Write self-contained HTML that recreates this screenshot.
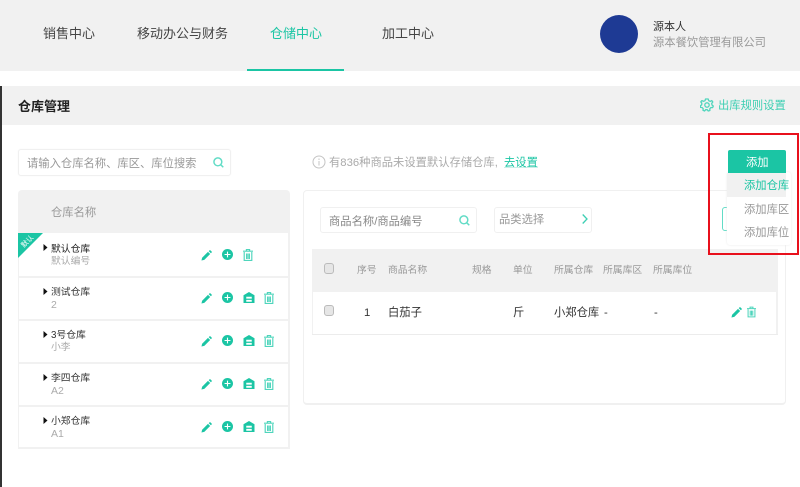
<!DOCTYPE html>
<html lang="zh">
<head>
<meta charset="utf-8">
<style>
html,body{margin:0;padding:0;background:#fff}
body{width:800px;height:487px;position:relative;overflow:hidden;font-family:"Liberation Sans","Noto Sans CJK SC",sans-serif;color:#333}
.a{position:absolute}
.t{position:absolute;white-space:nowrap;line-height:16px;height:16px;margin-top:1px}
svg{position:absolute;display:block}
.g{color:#999}
.c{color:#1bc5a4}
</style>
</head>
<body>
<svg width="0" height="0" style="position:absolute">
<defs>
<symbol id="pen" viewBox="0 0 12 12"><path d="M0.5 11.5 L1.2 8.4 L7.6 2 L10 4.4 L3.6 10.8 Z M8.4 1.2 L9.3 0.4 Q9.8 0 10.3 0.4 L11.6 1.7 Q12 2.2 11.6 2.7 L10.8 3.6 Z" fill="#1bc5a4"/></symbol>
<symbol id="plus" viewBox="0 0 12 12"><circle cx="6" cy="6" r="6" fill="#1bc5a4"/><path d="M6 2.8V9.2M2.8 6H9.2" stroke="#fff" stroke-width="1.2"/></symbol>
<symbol id="house" viewBox="0 0 12 12"><path d="M0 3.6 L6 0 L12 3.6 V12 H0 Z" fill="#1bc5a4"/><path d="M3 5.2H9V7.2H3ZM3 8.6H9V10.6H3Z" fill="#fff"/></symbol>
<symbol id="trash" viewBox="0 0 10 12"><path d="M0 2.2H10M3.4 2V0.6H6.6V2M1.2 3V11.4H8.8V3M3.6 4.5V10M5 4.5V10M6.4 4.5V10" fill="none" stroke="#4fd5bc" stroke-width="1.15"/></symbol>
<symbol id="search" viewBox="0 0 12 12"><circle cx="5.3" cy="5.3" r="4.3" fill="none" stroke="#62dcc6" stroke-width="1.6"/><path d="M8.4 8.4L11.2 11.2" stroke="#62dcc6" stroke-width="1.6"/></symbol>
</defs>
</svg>

<!-- top bar -->
<div class="a" style="left:0;top:0;width:800px;height:71px;background:#f1f1f1"></div>
<div class="t" style="left:43px;top:25px;font-size:13px;color:#444">销售中心</div>
<div class="t" style="left:137px;top:25px;font-size:13px;color:#444">移动办公与财务</div>
<div class="t c" style="left:270px;top:25px;font-size:13px">仓储中心</div>
<div class="t" style="left:382px;top:25px;font-size:13px;color:#444">加工中心</div>
<div class="a" style="left:247px;top:69px;width:97px;height:2px;background:#1bc5a4"></div>
<div class="a" style="left:600px;top:15px;width:38px;height:38px;border-radius:50%;background:#1e3a94"></div>
<div class="t" style="left:653px;top:18px;font-size:11px;color:#333">源本人</div>
<div class="t g" style="left:653px;top:34px;font-size:11.3px">源本餐饮管理有限公司</div>

<!-- page header -->
<div class="a" style="left:0;top:86px;width:2px;height:401px;background:#333"></div>
<div class="a" style="left:2px;top:86px;width:798px;height:39px;background:#f1f1f1"></div>
<div class="t" style="left:18px;top:98px;font-size:13px;font-weight:bold;color:#222">仓库管理</div>
<svg style="left:700px;top:98px" width="14" height="14" viewBox="0 0 14 14"><path d="M7 1 L8.2 1 L8.7 2.7 L10.2 3.4 L11.8 2.6 L12.8 4 L11.7 5.4 L12 7 L13.3 8 L12.6 9.6 L10.9 9.5 L9.8 10.8 L9.9 12.5 L8.2 13 L7.2 11.7 L5.6 11.7 L4.6 13 L3 12.3 L3.2 10.6 L2 9.5 L0.5 9.4 L0.3 7.8 L1.7 6.8 L1.8 5.2 L0.8 3.9 L1.9 2.6 L3.5 3.3 L5 2.7 L5.5 1 Z" fill="none" stroke="#4fd5bc" stroke-width="1.3" stroke-linejoin="round"/><circle cx="7" cy="7" r="2.2" fill="none" stroke="#4fd5bc" stroke-width="1.3"/></svg>
<div class="t" style="left:718px;top:97px;font-size:11.3px;color:#3dcfb3">出库规则设置</div>

<!-- search left -->
<div class="a" style="left:18px;top:149px;width:211px;height:25px;border:1px solid #f0f0f0;border-radius:3px;box-shadow:0 0 1px #eee"></div>
<div class="t g" style="left:27px;top:155px;font-size:11.3px">请输入仓库名称、库区、库位搜索</div>
<svg style="left:213px;top:157px" width="11" height="11"><use href="#search"/></svg>

<!-- notice -->
<svg style="left:312px;top:155px" width="14" height="14" viewBox="0 0 14 14"><circle cx="7" cy="7" r="6" fill="none" stroke="#c4c4c4"/><path d="M7 6V10.5M7 3.5V5" stroke="#c4c4c4"/></svg>
<div class="t" style="left:329px;top:154px;font-size:11.3px;color:#aaa">有836种商品未设置默认存储仓库,</div>
<div class="t" style="left:504px;top:154px;font-size:11.3px;color:#1bc5a4;text-decoration:underline;text-decoration-color:#c8efe7">去设置</div>

<!-- left panel -->
<div class="a" style="left:18px;top:190px;width:272px;height:43px;background:#f1f1f1;border-radius:4px 4px 0 0"></div>
<div class="t" style="left:51px;top:204px;font-size:11.3px;color:#999">仓库名称</div>
<div class="a" style="left:18px;top:233px;width:1px;height:216px;background:#f1f1f1"></div>
<div class="a" style="left:288px;top:233px;width:2px;height:216px;background:#f1f1f1"></div>
<div class="a" style="left:18px;top:276px;width:272px;height:2px;background:#f1f1f1"></div>
<div class="a" style="left:18px;top:319px;width:272px;height:2px;background:#f1f1f1"></div>
<div class="a" style="left:18px;top:362px;width:272px;height:2px;background:#f1f1f1"></div>
<div class="a" style="left:18px;top:405px;width:272px;height:2px;background:#f1f1f1"></div>
<div class="a" style="left:18px;top:447px;width:272px;height:2px;background:#f1f1f1"></div>

<svg style="left:18px;top:233px" width="25" height="25"><path d="M0 0H25L0 25Z" fill="#1bc5a4"/><text x="0" y="0" transform="translate(11 10) rotate(-45)" font-size="7" fill="#fff" text-anchor="middle" font-family="'Noto Sans CJK SC',sans-serif">默认</text></svg>

<!-- rows -->
<svg style="left:43px;top:244px" width="5" height="7"><path d="M0.5 0L4.5 3.5L0.5 7Z" fill="#111"/></svg>
<div class="t" style="left:51px;top:241px;font-size:9.8px;color:#222">默认仓库</div>
<div class="t" style="left:51px;top:253px;font-size:9.8px;color:#aaa">默认编号</div>
<svg style="left:201px;top:250px" width="11" height="11"><use href="#pen"/></svg>
<svg style="left:222px;top:249px" width="11" height="11"><use href="#plus"/></svg>
<svg style="left:243px;top:249px" width="10" height="12"><use href="#trash"/></svg>

<svg style="left:43px;top:288px" width="5" height="7"><path d="M0.5 0L4.5 3.5L0.5 7Z" fill="#111"/></svg>
<div class="t" style="left:51px;top:284px;font-size:9.8px;color:#333">测试仓库</div>
<div class="t" style="left:51px;top:296px;font-size:10.5px;color:#aaa">2</div>
<svg style="left:201px;top:293px" width="11" height="11"><use href="#pen"/></svg>
<svg style="left:222px;top:292px" width="11" height="11"><use href="#plus"/></svg>
<svg style="left:243px;top:292px" width="12" height="11"><use href="#house"/></svg>
<svg style="left:264px;top:292px" width="10" height="12"><use href="#trash"/></svg>

<svg style="left:43px;top:331px" width="5" height="7"><path d="M0.5 0L4.5 3.5L0.5 7Z" fill="#111"/></svg>
<div class="t" style="left:51px;top:327px;font-size:9.8px;color:#333">3号仓库</div>
<div class="t" style="left:51px;top:339px;font-size:9.8px;color:#aaa">小李</div>
<svg style="left:201px;top:336px" width="11" height="11"><use href="#pen"/></svg>
<svg style="left:222px;top:335px" width="11" height="11"><use href="#plus"/></svg>
<svg style="left:243px;top:335px" width="12" height="11"><use href="#house"/></svg>
<svg style="left:264px;top:335px" width="10" height="12"><use href="#trash"/></svg>

<svg style="left:43px;top:374px" width="5" height="7"><path d="M0.5 0L4.5 3.5L0.5 7Z" fill="#111"/></svg>
<div class="t" style="left:51px;top:370px;font-size:9.8px;color:#333">李四仓库</div>
<div class="t" style="left:51px;top:382px;font-size:10.5px;color:#aaa">A2</div>
<svg style="left:201px;top:379px" width="11" height="11"><use href="#pen"/></svg>
<svg style="left:222px;top:378px" width="11" height="11"><use href="#plus"/></svg>
<svg style="left:243px;top:378px" width="12" height="11"><use href="#house"/></svg>
<svg style="left:264px;top:378px" width="10" height="12"><use href="#trash"/></svg>

<svg style="left:43px;top:417px" width="5" height="7"><path d="M0.5 0L4.5 3.5L0.5 7Z" fill="#111"/></svg>
<div class="t" style="left:51px;top:413px;font-size:9.8px;color:#333">小郑仓库</div>
<div class="t" style="left:51px;top:425px;font-size:10.5px;color:#aaa">A1</div>
<svg style="left:201px;top:422px" width="11" height="11"><use href="#pen"/></svg>
<svg style="left:222px;top:421px" width="11" height="11"><use href="#plus"/></svg>
<svg style="left:243px;top:421px" width="12" height="11"><use href="#house"/></svg>
<svg style="left:264px;top:421px" width="10" height="12"><use href="#trash"/></svg>

<!-- right panel -->
<div class="a" style="left:303px;top:190px;width:481px;height:212px;border:1px solid #f0f0f0;border-bottom-width:2px;border-radius:4px"></div>
<div class="a" style="left:320px;top:207px;width:155px;height:24px;border:1px solid #f0f0f0;border-radius:3px"></div>
<div class="t" style="left:329px;top:213px;font-size:11.3px;color:#888">商品名称/商品编号</div>
<svg style="left:459px;top:215px" width="11" height="11"><use href="#search"/></svg>
<div class="a" style="left:494px;top:207px;width:96px;height:24px;border:1px solid #f0f0f0;border-radius:3px"></div>
<div class="t" style="left:499px;top:211px;font-size:11.3px;color:#999">品类选择</div>
<svg style="left:582px;top:214px" width="6" height="10"><path d="M0.7 0.5L5 5L0.7 9.5" fill="none" stroke="#3dcfb3" stroke-width="1.3"/></svg>
<div class="a" style="left:722px;top:207px;width:20px;height:22px;border:1px solid #62dcc6;border-radius:3px;background:#fff"></div>

<!-- table -->
<div class="a" style="left:312px;top:249px;width:466px;height:43px;background:#f1f1f1"></div>
<div class="a" style="left:312px;top:292px;width:1px;height:43px;background:#f1f1f1"></div>
<div class="a" style="left:776px;top:292px;width:2px;height:43px;background:#f1f1f1"></div>
<div class="a" style="left:312px;top:334px;width:466px;height:1px;background:#ececec"></div>
<div class="a" style="left:324px;top:263px;width:8px;height:9px;border:1px solid #bbb;border-radius:3px;background:#e6e6e6"></div>
<div class="t" style="left:357px;top:262px;font-size:9.8px;color:#999">序号</div>
<div class="t" style="left:388px;top:262px;font-size:9.8px;color:#999">商品名称</div>
<div class="t" style="left:472px;top:262px;font-size:9.8px;color:#999">规格</div>
<div class="t" style="left:513px;top:262px;font-size:9.8px;color:#999">单位</div>
<div class="t" style="left:554px;top:262px;font-size:9.8px;color:#999">所属仓库</div>
<div class="t" style="left:603px;top:262px;font-size:9.8px;color:#999">所属库区</div>
<div class="t" style="left:653px;top:262px;font-size:9.8px;color:#999">所属库位</div>

<div class="a" style="left:324px;top:305px;width:8px;height:9px;border:1px solid #bbb;border-radius:3px;background:#e6e6e6"></div>
<div class="t" style="left:364px;top:304px;font-size:11.3px;color:#333">1</div>
<div class="t" style="left:388px;top:304px;font-size:11.3px;color:#333">白茄子</div>
<div class="t" style="left:513px;top:304px;font-size:11.3px;color:#333">斤</div>
<div class="t" style="left:554px;top:304px;font-size:11.3px;color:#333">小郑仓库</div>
<div class="t" style="left:604px;top:304px;font-size:11.3px;color:#333">-</div>
<div class="t" style="left:654px;top:304px;font-size:11.3px;color:#333">-</div>
<svg style="left:731px;top:307px" width="11" height="11"><use href="#pen"/></svg>
<svg style="left:747px;top:306px" width="9" height="12"><use href="#trash"/></svg>

<!-- add button + dropdown -->
<div class="a" style="left:727px;top:172px;width:64px;height:73px;background:#fff;border-radius:3px;box-shadow:0 0 2px #e8e8e8"></div>
<div class="a" style="left:727px;top:173px;width:59px;height:24px;background:#f1f1f1"></div>
<div class="a" style="left:728px;top:150px;width:58px;height:23px;background:#1bc5a4;border-radius:2px 2px 0 0"></div>
<div class="t" style="left:746px;top:154px;font-size:11.3px;color:#fff">添加</div>
<div class="t" style="left:744px;top:177px;font-size:11.3px;color:#1bc5a4">添加仓库</div>
<div class="t" style="left:744px;top:201px;font-size:11.3px;color:#999">添加库区</div>
<div class="t" style="left:744px;top:224px;font-size:11.3px;color:#999">添加库位</div>

<!-- red box -->
<div class="a" style="left:708px;top:133px;width:87px;height:118px;border:2px solid #e8101c"></div>
</body>
</html>
